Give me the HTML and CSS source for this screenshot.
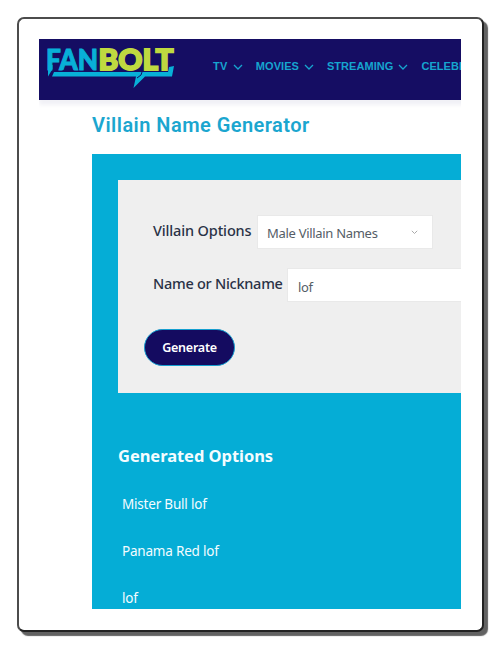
FILE: index.html
```html
<!DOCTYPE html>
<html lang="en">
<head>
<meta charset="utf-8">
<title>Villain Name Generator</title>
<link rel="stylesheet" href="styles.css">
</head>
<body>
<div class="frame">
  <div class="viewport">
    <header class="header">
      <svg class="logo" width="130" height="44" viewBox="0 0 130 44" role="img" aria-label="FanBolt">
        <text class="fan" x="-1" y="22.500" textLength="52" lengthAdjust="spacingAndGlyphs">FAN</text>
        <text class="bolt" x="51.500" y="22.500" textLength="75" lengthAdjust="spacingAndGlyphs">BOLT</text>
        <path class="bubble" d="M1 18v11.500L5.500 22V18z"/>
        <path class="bubble" d="M7 25H121L122 20L127 19L125 29.500H98L86.500 41L89 29.500H5z"/>
        <path class="cut" d="M95 25L94 28L90 31"/>
      </svg>
      <nav class="nav">
        <a class="item"><span class="tv">TV</span><svg width="10" height="6" viewBox="0 0 10 6"><path d="M1 1l4 4 4-4"/></svg></a>
        <a class="item"><span class="movies">MOVIES</span><svg width="10" height="6" viewBox="0 0 10 6"><path d="M1 1l4 4 4-4"/></svg></a>
        <a class="item"><span class="streaming">STREAMING</span><svg width="10" height="6" viewBox="0 0 10 6"><path d="M1 1l4 4 4-4"/></svg></a>
        <a class="item"><span>CELEBRITY</span></a>
      </nav>
    </header>
    <main class="main">
      <h1>Villain Name Generator</h1>
      <section class="generator">
        <form class="form">
          <div class="row">
            <label class="label-options">Villain Options</label>
            <div class="select"><span>Male Villain Names</span><svg width="7" height="5" viewBox="0 0 7 5"><path d="M.8.8l2.700 2.700L6.200.8"/></svg></div>
          </div>
          <div class="row">
            <label class="label-name">Name or Nickname</label>
            <div class="input">lof</div>
          </div>
          <button type="button">Generate</button>
        </form>
        <h2>Generated Options</h2>
        <ul>
          <li>Mister Bull lof</li>
          <li>Panama Red lof</li>
          <li>lof</li>
        </ul>
      </section>
    </main>
  </div>
</div>
</body>
</html>
```
FILE: styles.css
```css
* { box-sizing: border-box; }

body {
  margin: 0;
  padding: 17px;
  background: #fff;
  font-family: "Noto Sans", "Open Sans", sans-serif;
}

.frame {
  width: 467px;
  height: 615px;
  padding: 20px;
  border: 2px solid #4c4c4c;
  border-right-color: #222;
  border-bottom-color: #222;
  border-radius: 7px;
  background: #fff;
  box-shadow: 4px 4px 1px #626262;
}

.viewport {
  width: 422px;
  height: 570px;
  overflow: hidden;
}

.header {
  display: flex;
  align-items: flex-start;
  width: 600px;
  height: 61px;
  padding: 8px 0 0 8px;
  background: #150d63;
  box-shadow: 0 5px 4px #f1f1f6;
}

.logo { flex: none; overflow: visible; }
.fan, .bolt { font-family: Lato, sans-serif; font-size: 29px; font-weight: 900; }
.fan { fill: #08b0d8; stroke: #08b0d8; stroke-width: 1px; }
.bolt { fill: #bfd940; stroke: #bfd940; stroke-width: 1.800px; }
.bubble { fill: #08b0d8; }
.cut { fill: none; stroke: #150d63; stroke-width: 1px; }

.nav {
  display: flex;
  gap: 13px;
  margin: 12px 0 0 36px;
  font: 700 11px/14px "Liberation Sans", Arial, sans-serif;
  letter-spacing: .05px;
  color: #16a5cf;
}
.item { display: flex; align-items: center; gap: 5px; }
.item svg { margin-top: 2px; fill: none; stroke: currentColor; stroke-width: 1.300; }
.tv { letter-spacing: .4px; }

.main { padding: 11px 0 0 53px; }

h1 {
  margin: 0;
  height: 43px;
  font: 600 20px/28px Roboto, sans-serif;
  letter-spacing: .46px;
  color: #1ba6cf;
  white-space: nowrap;
}

.generator {
  width: 500px;
  height: 500px;
  padding: 26px 0 0 26px;
  background: #05add6;
  color: #f4fcff;
}

.form {
  height: 213px;
  padding: 35px 0 0 35px;
  background: #efefef;
  color: #2a3246;
}

.row {
  display: flex;
  height: 34px;
  margin-bottom: 19px;
  font-size: 14.500px;
  line-height: 31px;
  white-space: nowrap;
}
.row label { flex: none; font-weight: 500; letter-spacing: -.14px; }
.row .label-options { width: 104px; }
.row .label-name { width: 134px; letter-spacing: -.27px; }

.select, .input {
  height: 34px;
  padding: 1px 10px 0 9px;
  border: 1px solid #e9e9e9;
  background: #fff;
  color: #555d66;
  font-size: 13px;
  letter-spacing: -.3px;
  line-height: 32px;
}
.select { display: flex; justify-content: space-between; align-items: center; width: 176px; padding-right: 14px; }
.select svg { fill: none; stroke: #aaa; }
.input { flex: 1; padding-left: 10px; line-height: 34px; }

button {
  display: block;
  width: 91px;
  height: 37px;
  margin: 27px 0 0 -9px;
  padding: 0;
  border: 1px solid #149fd0;
  border-radius: 19px;
  background: #140b60;
  color: #fff;
  font: 600 12.500px/34px "Noto Sans", sans-serif;
  letter-spacing: -.25px;
}

h2 {
  margin: 50px 0 22px;
  font-size: 16.500px;
  font-weight: 700;
  line-height: 26px;
  letter-spacing: -.05px;
}

ul { margin: 0; padding: 0 0 0 4px; list-style: none; }
li { height: 47px; font-size: 13.500px; line-height: 26px; letter-spacing: -.2px; }
```
